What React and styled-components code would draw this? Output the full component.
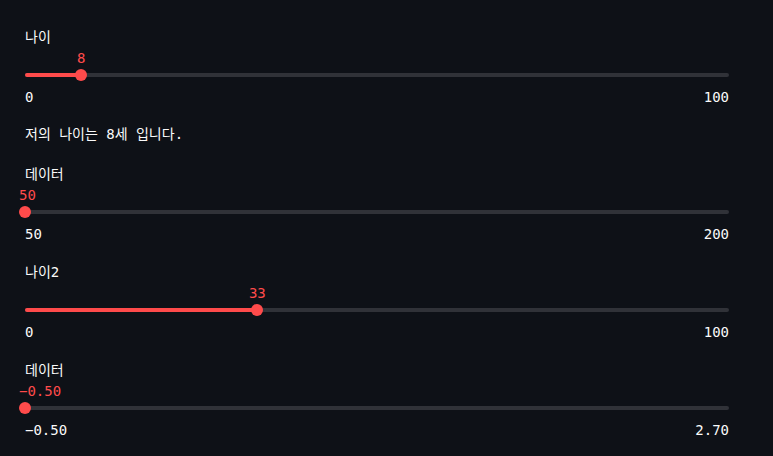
import React from 'react';
import styled, { createGlobalStyle } from 'styled-components';

const GlobalStyle = createGlobalStyle`
  html, body {
    margin: 0;
    padding: 0;
    background: #0e1117;
  }
  body {
    font-family: "DejaVu Sans Mono", "Noto Sans CJK KR", monospace;
    color: #fafafa;
  }
`;

const Page = styled.div`
  width: 773px;
  min-height: 456px;
  box-sizing: border-box;
  padding: 27px 44px 0 25px;
  display: flex;
  flex-direction: column;
  font-size: 14px;
`;

const SliderBlock = styled.div`
  display: flex;
  flex-direction: column;
  margin-top: ${({ gap }) => gap || 0}px;
`;

const Label = styled.div`
  height: 20px;
  line-height: 20px;
  color: #fafafa;
`;

const ValueRow = styled.div`
  position: relative;
  height: 22px;
`;

const ThumbValue = styled.span`
  position: absolute;
  top: 0;
  line-height: 22px;
  color: #ff4b4b;
  white-space: nowrap;
  transform: ${({ edge }) => (edge ? 'none' : 'translateX(-50%)')};
`;

const TrackArea = styled.div`
  position: relative;
  height: 12px;
  display: flex;
  align-items: center;
`;

const Track = styled.div`
  position: relative;
  width: 100%;
  height: 4px;
  border-radius: 2px;
  background: #303238;
`;

const Fill = styled.div`
  height: 100%;
  border-radius: 2px;
  background: #ff4b4b;
`;

const Thumb = styled.div`
  position: absolute;
  top: 50%;
  width: 12px;
  height: 12px;
  border-radius: 50%;
  background: #ff4b4b;
  transform: translate(-50%, -50%);
`;

const TickBar = styled.div`
  margin-top: 6px;
  height: 20px;
  line-height: 20px;
  display: flex;
  justify-content: space-between;
  color: #fafafa;
`;

const Paragraph = styled.p`
  margin: 17px 0 0;
  line-height: 20px;
  height: 20px;
`;

function Slider({ label, value, min, max, format, gap }) {
  const pct = ((value - min) / (max - min)) * 100;
  const atMin = value === min;
  return (
    <SliderBlock gap={gap}>
      <Label>{label}</Label>
      <ValueRow>
        <ThumbValue
          edge={atMin}
          style={{ left: atMin ? '-6px' : `${pct}%` }}
        >
          {format(value)}
        </ThumbValue>
      </ValueRow>
      <TrackArea>
        <Track>
          <Fill style={{ width: `${pct}%` }} />
          <Thumb style={{ left: `${pct}%` }} />
        </Track>
      </TrackArea>
      <TickBar>
        <span>{format(min)}</span>
        <span>{format(max)}</span>
      </TickBar>
    </SliderBlock>
  );
}

const int = (v) => String(v);
const dec = (v) => (v < 0 ? '\u2212' + Math.abs(v).toFixed(2) : v.toFixed(2));

export default function App() {
  return (
    <>
      <GlobalStyle />
      <Page>
        <Slider label="나이" value={8} min={0} max={100} format={int} />
        <Paragraph>저의 나이는 8세 입니다.</Paragraph>
        <Slider label="데이터" value={50} min={50} max={200} format={int} gap={20} />
        <Slider label="나이2" value={33} min={0} max={100} format={int} gap={18} />
        <Slider label="데이터" value={-0.5} min={-0.5} max={2.7} format={dec} gap={18} />
      </Page>
    </>
  );
}
